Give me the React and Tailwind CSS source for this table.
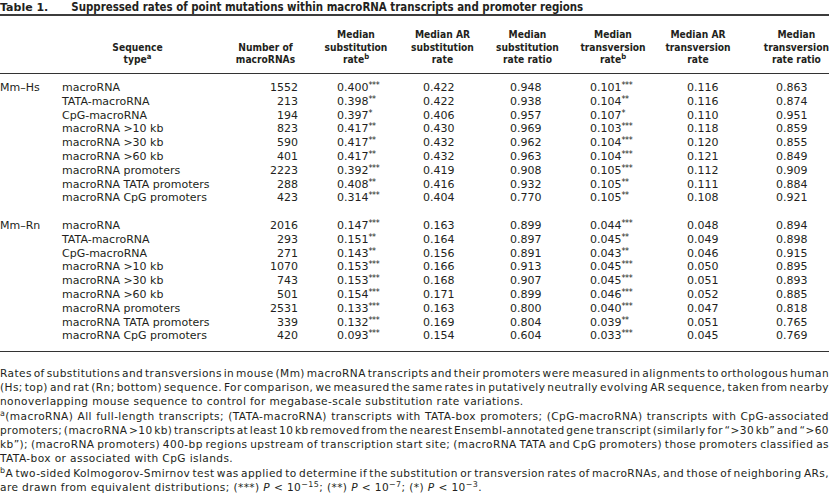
import React from "react";

const hs = [
  ["macroRNA", "1552", "0.400", "***", "0.422", "0.948", "0.101", "***", "0.116", "0.863"],
  ["TATA-macroRNA", "213", "0.398", "**", "0.422", "0.938", "0.104", "**", "0.116", "0.874"],
  ["CpG-macroRNA", "194", "0.397", "*", "0.406", "0.957", "0.107", "*", "0.110", "0.951"],
  ["macroRNA >10 kb", "823", "0.417", "**", "0.430", "0.969", "0.103", "***", "0.118", "0.859"],
  ["macroRNA >30 kb", "590", "0.417", "**", "0.432", "0.962", "0.104", "***", "0.120", "0.855"],
  ["macroRNA >60 kb", "401", "0.417", "**", "0.432", "0.963", "0.104", "***", "0.121", "0.849"],
  ["macroRNA promoters", "2223", "0.392", "***", "0.419", "0.908", "0.105", "***", "0.112", "0.909"],
  ["macroRNA TATA promoters", "288", "0.408", "**", "0.416", "0.932", "0.105", "**", "0.111", "0.884"],
  ["macroRNA CpG promoters", "423", "0.314", "***", "0.404", "0.770", "0.105", "**", "0.108", "0.921"],
];

const rn = [
  ["macroRNA", "2016", "0.147", "***", "0.163", "0.899", "0.044", "***", "0.048", "0.894"],
  ["TATA-macroRNA", "293", "0.151", "**", "0.164", "0.897", "0.045", "**", "0.049", "0.898"],
  ["CpG-macroRNA", "271", "0.143", "**", "0.156", "0.891", "0.043", "**", "0.046", "0.915"],
  ["macroRNA >10 kb", "1070", "0.153", "***", "0.166", "0.913", "0.045", "***", "0.050", "0.895"],
  ["macroRNA >30 kb", "743", "0.153", "***", "0.168", "0.907", "0.045", "***", "0.051", "0.893"],
  ["macroRNA >60 kb", "501", "0.154", "***", "0.171", "0.899", "0.046", "***", "0.052", "0.885"],
  ["macroRNA promoters", "2531", "0.133", "***", "0.163", "0.800", "0.040", "***", "0.047", "0.818"],
  ["macroRNA TATA promoters", "339", "0.132", "***", "0.169", "0.804", "0.039", "**", "0.051", "0.765"],
  ["macroRNA CpG promoters", "420", "0.093", "***", "0.154", "0.604", "0.033", "***", "0.045", "0.769"],
];

// small raised asterisks after the significant rates
const Stars = ({ s }) => (
  <span className="text-[8px] leading-none align-[3px] tracking-[-0.4px]">{s}</span>
);

const Group = ({ label, rows }) =>
  rows.map((r, i) => (
    <tr key={label + i} className="h-[13.8px] leading-[13.8px]">
      <td className="p-0">{i === 0 ? label : ""}</td>
      <td className="p-0 pl-[2px]">{r[0]}</td>
      <td className="p-0 pr-[18px] text-right">{r[1]}</td>
      <td className="p-0 pl-[21px]">
        {r[2]}
        <Stars s={r[3]} />
      </td>
      <td className="p-0 pl-[27px]">{r[4]}</td>
      <td className="p-0 pl-[21px]">{r[5]}</td>
      <td className="p-0 pl-[24px]">
        {r[6]}
        <Stars s={r[7]} />
      </td>
      <td className="p-0 pl-[27px]">{r[8]}</td>
      <td className="p-0 pl-[40px]">{r[9]}</td>
    </tr>
  ));

// footnote lines are broken as in the print; all but the last of a note are justified
const Line = ({ children, last }) => (
  <div
    className={
      last
        ? "text-left"
        : "text-justify [text-align-last:justify] [word-spacing:-5px]"
    }
  >
    {children}
  </div>
);

const App = () => {
  const th =
    "p-0 pt-[13px] pb-[6px] align-bottom text-center font-bold leading-[12.5px]";
  return (
    <div className="w-[829px] h-[496px] bg-white text-[#231f20] overflow-hidden">
      <div className="text-[11px] leading-[13px] border-b-2 border-[#3c3c3c]">
        <span className="font-['DejaVu_Sans',sans-serif] font-bold">Table 1.</span>
        <span className="ml-[23px] font-['DejaVu_Sans_Condensed','DejaVu_Sans',sans-serif] text-[11.4px] font-bold">
          Suppressed rates of point mutations within macroRNA transcripts and promoter regions
        </span>
      </div>

      <table className="w-full table-fixed border-collapse font-['DejaVu_Sans',sans-serif] text-[11px]">
        <colgroup>
          <col className="w-[60px]" />
          <col className="w-[155px]" />
          <col className="w-[101px]" />
          <col className="w-[80px]" />
          <col className="w-[93px]" />
          <col className="w-[77px]" />
          <col className="w-[94px]" />
          <col className="w-[76px]" />
          <col className="w-[93px]" />
        </colgroup>
        <thead className="font-['DejaVu_Sans_Condensed','DejaVu_Sans',sans-serif] text-[10.2px]">
          <tr className="border-b border-[#333]">
            <th className={th}></th>
            <th className={th}>
              Sequence
              <br />
              type<sup>a</sup>
            </th>
            <th className={th}>
              Number of
              <br />
              macroRNAs
            </th>
            <th className={th}>
              Median
              <br />
              substitution
              <br />
              rate<sup>b</sup>
            </th>
            <th className={th}>
              Median AR
              <br />
              substitution
              <br />
              rate
            </th>
            <th className={th}>
              Median
              <br />
              substitution
              <br />
              rate ratio
            </th>
            <th className={th}>
              Median
              <br />
              transversion
              <br />
              rate<sup>b</sup>
            </th>
            <th className={th}>
              Median AR
              <br />
              transversion
              <br />
              rate
            </th>
            <th className={th + " !text-right"}>
              <span className="inline-block text-center">
                Median
                <br />
                transversion
                <br />
                rate ratio
              </span>
            </th>
          </tr>
        </thead>
        <tbody>
          <tr className="h-[8px]" />
          <Group label="Mm–Hs" rows={hs} />
          <tr className="h-[13.8px]" />
          <Group label="Mm–Rn" rows={rn} />
          <tr className="h-[8px] border-b border-[#333]" />
        </tbody>
      </table>

      <div className="pt-[14px] font-['DejaVu_Sans',sans-serif] text-[10.6px] tracking-[0.4px] leading-[14.3px]">
        <Line>
          Rates of substitutions and transversions in mouse (Mm) macroRNA transcripts and their promoters were measured in alignments to orthologous human
        </Line>
        <Line>
          (Hs; top) and rat (Rn; bottom) sequence. For comparison, we measured the same rates in putatively neutrally evolving AR sequence, taken from nearby
        </Line>
        <Line last>
          nonoverlapping mouse sequence to control for megabase-scale substitution rate variations.
        </Line>
        <Line>
          <sup>a</sup>(macroRNA) All full-length transcripts; (TATA-macroRNA) transcripts with TATA-box promoters; (CpG-macroRNA) transcripts with CpG-associated
        </Line>
        <Line>
          promoters; (macroRNA &gt;10 kb) transcripts at least 10 kb removed from the nearest Ensembl-annotated gene transcript (similarly for “&gt;30 kb” and “&gt;60
        </Line>
        <Line>
          kb”); (macroRNA promoters) 400-bp regions upstream of transcription start site; (macroRNA TATA and CpG promoters) those promoters classified as
        </Line>
        <Line last>TATA-box or associated with CpG islands.</Line>
        <Line>
          <sup>b</sup>A two-sided Kolmogorov-Smirnov test was applied to determine if the substitution or transversion rates of macroRNAs, and those of neighboring ARs,
        </Line>
        <Line last>
          are drawn from equivalent distributions; (***) <i>P</i> &lt; 10<sup>−15</sup>; (**) <i>P</i> &lt; 10<sup>−7</sup>; (*) <i>P</i> &lt; 10<sup>−3</sup>.
        </Line>
      </div>
    </div>
  );
};

export default App;
